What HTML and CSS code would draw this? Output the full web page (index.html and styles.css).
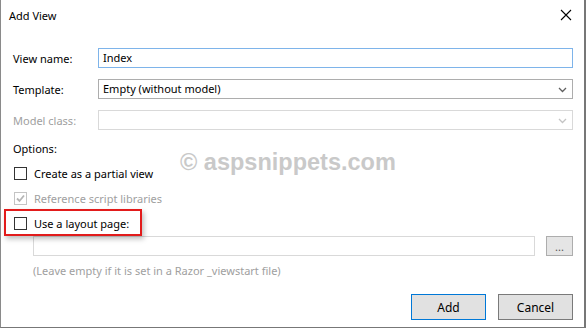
FILE: index.html
```html
<!DOCTYPE html>
<html>
<head>
<meta charset="utf-8">
<link rel="stylesheet" href="styles.css">
</head>
<body>
<div class="dialog">
  <div class="titlebar">
    <span class="title">Add View</span>
    <svg class="close" width="12" height="12" viewBox="0 0 12 12"><path d="M1 1 L11 11 M11 1 L1 11" stroke="#000" stroke-width="1.1" fill="none"/></svg>
  </div>
  <div class="content">
    <div class="field">
      <label class="lbl">View name:</label>
      <div class="input focus">Index</div>
    </div>
    <div class="field">
      <label class="lbl">Template:</label>
      <div class="input select">Empty (without model)
        <svg class="chev" width="9" height="6" viewBox="0 0 9 6"><path d="M1 1 L4.5 4.5 L8 1" stroke="#606060" stroke-width="1.3" fill="none"/></svg>
      </div>
    </div>
    <div class="field">
      <label class="lbl disabled">Model class:</label>
      <div class="input select off">
        <svg class="chev" width="9" height="6" viewBox="0 0 9 6"><path d="M1 1 L4.5 4.5 L8 1" stroke="#c4c4c4" stroke-width="1.3" fill="none"/></svg>
      </div>
    </div>
    <div class="options">Options:</div>
    <div class="checks">
      <div class="check"><span class="box"></span><span>Create as a partial view</span></div>
      <div class="check disabled"><span class="box off"><svg width="11" height="11" viewBox="0 0 11 11"><path d="M2 5.5 L4.5 8 L9 2.5" stroke="#b5b5b5" stroke-width="1.8" fill="none"/></svg></span><span>Reference script libraries</span></div>
      <div class="check"><span class="box"></span><span>Use a layout page:</span></div>
    </div>
    <div class="pathrow">
      <div class="input off path"></div>
      <div class="browse">...</div>
    </div>
    <div class="hint">(Leave empty if it is set in a Razor _viewstart file)</div>
    <div class="buttons">
      <div class="btn primary">Add</div>
      <div class="btn">Cancel</div>
    </div>
  </div>
  <div class="highlight"></div>
  <div class="watermark">© aspsnippets.com</div>
</div>
</body>
</html>
```
FILE: styles.css
```css
html, body {
  margin: 0;
  padding: 0;
  background: #fff;
}
.dialog {
  position: relative;
  width: 586px;
  height: 328px;
  box-sizing: border-box;
  border-left: 1px solid #8a8a8a;
  border-right: 2px solid #777;
  border-bottom: 1px solid #777;
  background: #fff;
  font-family: "Noto Sans", sans-serif;
  font-size: 11px;
  color: #000;
  overflow: hidden;
}
.titlebar {
  height: 31px;
  display: flex;
  align-items: center;
  justify-content: space-between;
  padding: 0 8px 1px 8px;
  box-sizing: border-box;
}
.title {
  font-size: 11px;
}
.close {
  margin-right: 4px;
  margin-bottom: 1px;
}
.content {
  padding: 17px 11px 0 12px;
  display: flex;
  flex-direction: column;
}
.field {
  display: flex;
  align-items: center;
  height: 20px;
  margin-bottom: 11px;
}
.lbl {
  width: 85px;
  flex: none;
}
.disabled {
  color: #a0a0a0;
}
.input {
  flex: 1;
  height: 20px;
  box-sizing: border-box;
  border: 1px solid #adadad;
  padding: 0 0 0 4px;
  display: flex;
  align-items: center;
  position: relative;
  line-height: 18px;
}
.input.focus {
  border-color: #7eb4ea;
}
.input.off {
  border-color: #d9d9d9;
}
.chev {
  position: absolute;
  right: 5px;
  top: 7px;
}
.options {
  margin-top: -2px;
  height: 20px;
  line-height: 20px;
}
.checks {
  margin-top: 2px;
  display: flex;
  flex-direction: column;
}
.check {
  display: flex;
  align-items: center;
  height: 25px;
  padding-left: 1px;
}
.box {
  width: 13px;
  height: 13px;
  box-sizing: border-box;
  border: 1px solid #333;
  margin-right: 7px;
  display: flex;
  align-items: center;
  justify-content: center;
}
.box.off {
  border-color: #c4c4c4;
}
.pathrow {
  display: flex;
  align-items: center;
  padding-left: 20px;
  height: 20px;
}
.path {
  flex: 1;
  border-color: #e3e3e3;
}
.browse {
  width: 27px;
  height: 20px;
  box-sizing: border-box;
  margin-left: 11px;
  border: 1px solid #adadad;
  background: #e5e5e5;
  color: #555;
  font-size: 11px;
  display: flex;
  align-items: center;
  justify-content: center;
  line-height: 1;
}
.hint {
  padding-left: 20px;
  color: #a0a0a0;
  margin-top: 6px;
  height: 18px;
  line-height: 18px;
}
.buttons {
  display: flex;
  justify-content: flex-end;
  gap: 12px;
  margin-top: 14px;
}
.btn {
  width: 75px;
  height: 26px;
  box-sizing: border-box;
  border: 1px solid #7a7a7a;
  background: #e1e1e1;
  display: flex;
  align-items: center;
  justify-content: center;
  font-size: 12px;
}
.btn.primary {
  border: 1px solid #0078d7;
}
.highlight {
  position: absolute;
  left: 3px;
  top: 209px;
  width: 138px;
  height: 27px;
  box-sizing: border-box;
  border: 2px solid #e21b1b;
  box-shadow: 2px 3px 5px rgba(0,0,0,0.25);
}
.watermark {
  position: absolute;
  left: 179px;
  top: 149px;
  font-family: "Liberation Sans", Arial, sans-serif;
  font-weight: bold;
  font-size: 23.5px;
  color: #c9c9c9;
  white-space: nowrap;
}
```
